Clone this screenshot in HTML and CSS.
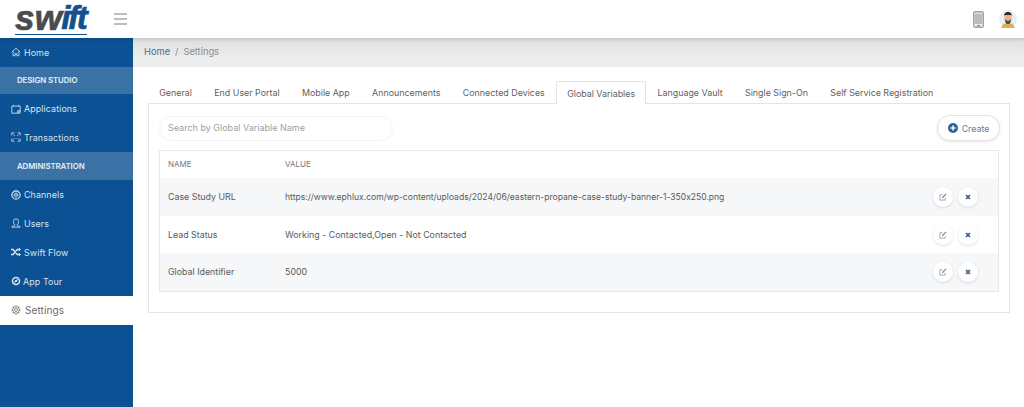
FILE: index.html
```html
<!DOCTYPE html>
<html lang="en">
<head>
<meta charset="utf-8">
<title>Settings</title>
<link rel="stylesheet" href="styles.css">
</head>
<body>
<header class="topbar">
  <div class="logo"><span class="logo-grey">sw</span><span class="logo-blue">ift</span></div>
  <svg class="burger" width="13" height="12" viewBox="0 0 13 12"><path d="M0 1h13M0 6h13M0 11h13" stroke="#a9a9a9" stroke-width="1.4"/></svg>
  <div class="top-right">
    <svg class="phone" width="11" height="17" viewBox="0 0 11 17"><rect x=".7" y=".7" width="9.6" height="15.6" rx="1.6" fill="#f0f0f0" stroke="#a2a2a2" stroke-width="1.4"/><rect x="1.5" y="2.6" width="8" height="10.4" fill="#bdbdbd"/><rect x="4" y="14" width="3" height="1.4" fill="#8e8e8e"/></svg>
    <svg class="avatar" width="18" height="18" viewBox="0 0 18 18"><circle cx="9" cy="9" r="9" fill="#e6f0f3"/><path d="M2.5 18c.5-4 3-5 6.500-5s6 1 6.500 5z" fill="#e0ac55"/><ellipse cx="9" cy="8" rx="3.600" ry="4.600" fill="#e9b48f"/><path d="M5.200 6.500C5 3 7 2 9 2s4 1 3.800 4.500L12 5H6z" fill="#2c2a28"/><path d="M5.800 9c.4 4 2 5 3.200 5s2.800-1 3.200-5l-1 1.500H6.800z" fill="#3a332e"/><rect x="8" y="10.800" width="2" height=".8" fill="#e9b48f"/></svg>
  </div>
</header>
<div class="shell">
  <nav class="sidebar">
    <a class="nav-item"><svg class="ni" viewBox="0 0 12 12"><path d="M1 6 6 1.500 11 6M2.500 5v5.500h2.500V7.500h2v3h2.500V5" fill="none" stroke="currentColor"/></svg>Home</a>
    <div class="nav-head">DESIGN STUDIO</div>
    <a class="nav-item"><svg class="ni" viewBox="0 0 12 12"><path d="M1 2.500h10v8.500H1zM3 1v1.500M9 1v1.500M8 11l3-3H8z" fill="none" stroke="currentColor"/></svg>Applications</a>
    <a class="nav-item"><svg class="ni" viewBox="0 0 12 12"><path d="M1 4V1h3M8 1h3v3M1 8v3h3M8 11h3V8M3 3l1.500 1.500M9 3 7.500 4.500M3 9l1.500-1.500M9 9 7.500 7.500" fill="none" stroke="currentColor"/></svg>Transactions</a>
    <div class="nav-head second">ADMINISTRATION</div>
    <a class="nav-item"><svg class="ni" viewBox="0 0 12 12"><circle cx="6" cy="6" r="5" fill="none" stroke="currentColor" stroke-width="1.300"/><circle cx="6" cy="6" r="1.500" fill="none" stroke="currentColor"/><path d="M6 1v3.500M6 7.500V11M1 6h3.500M7.500 6H11M2.500 2.500 5 5M7 7l2.500 2.500M9.500 2.500 7 5M5 7 2.500 9.500" stroke="currentColor" stroke-width=".7"/></svg>Channels</a>
    <a class="nav-item"><svg class="ni" viewBox="0 0 12 12"><path d="M4.500 8C3 6.500 3 5.500 3 4a3 3 0 0 1 6 0c0 1.500 0 2.500-1.500 4v1l3.500 1.500V11H1v-.500L4.500 9z" fill="none" stroke="currentColor"/></svg>Users</a>
    <a class="nav-item"><svg class="ni" viewBox="0 0 12 12"><path d="M0 3h2.500l5 6H10M0 9h2.500l5-6H10" fill="none" stroke="currentColor" stroke-width="1.600"/><path d="m9.500 1 2.500 2-2.500 2zM9.500 7 12 9l-2.500 2z" fill="currentColor"/></svg>Swift Flow</a>
    <a class="nav-item tour"><svg class="ni" viewBox="0 0 12 12"><circle cx="6" cy="6" r="4.200" fill="none" stroke="currentColor" stroke-width="1.800"/><path d="M8.500 3.500 7 7 3.500 8.500 5 5z" fill="currentColor"/></svg>App Tour</a>
    <a class="nav-item active"><svg class="ni" viewBox="0 0 12 12"><circle cx="6" cy="6" r="1.800" fill="none" stroke="currentColor" stroke-width=".9"/><circle cx="6" cy="6" r="4" fill="none" stroke="currentColor" stroke-width=".9"/><path d="M6 .5v1.500M6 10v1.500M.5 6H2M10 6h1.500M2.100 2.100l1.100 1.100M8.800 8.800l1.100 1.100M9.900 2.100 8.800 3.200M3.200 8.800 2.100 9.900" stroke="currentColor" stroke-width="1.300"/></svg>Settings</a>
  </nav>
  <main class="main">
    <div class="crumbs"><span class="crumb-link">Home</span><span class="crumb-sep">/</span><span>Settings</span></div>
    <div class="content">
      <ul class="tabs">
        <li>General</li><li>End User Portal</li><li>Mobile App</li><li>Announcements</li><li>Connected Devices</li><li class="current">Global Variables</li><li>Language Vault</li><li>Single Sign-On</li><li>Self Service Registration</li>
      </ul>
      <section class="card">
        <div class="toolbar">
          <div class="search">Search by Global Variable Name</div>
          <button class="create"><svg width="10" height="10" viewBox="0 0 10 10"><circle cx="5" cy="5" r="5" fill="#2f6299"/><path d="M5 2.500v5M2.500 5h5" stroke="#fff" stroke-width="1.500"/></svg>Create</button>
        </div>
        <div class="table">
          <div class="row head"><div class="c-name">NAME</div><div class="c-val">VALUE</div></div>
          <div class="row odd"><div class="c-name">Case Study URL</div><div class="c-val url">https://www.ephlux.com/wp-content/uploads/2024/06/eastern-propane-case-study-banner-1-350x250.png</div><div class="acts"><span class="act"><svg class="edit" viewBox="0 0 9 9"><path d="M7 5.500V8H1V2h3" fill="none" stroke="currentColor" stroke-width=".8"/><path d="m3.500 4.500 4-4 1 1-4 4-1.300.3z" fill="currentColor"/></svg></span><span class="act"><svg class="del" viewBox="0 0 6 6"><path d="m1 1 4 4M5 1 1 5" stroke="currentColor" stroke-width="1.700"/></svg></span></div></div>
          <div class="row"><div class="c-name">Lead Status</div><div class="c-val">Working - Contacted,Open - Not Contacted</div><div class="acts"><span class="act"><svg class="edit" viewBox="0 0 9 9"><path d="M7 5.500V8H1V2h3" fill="none" stroke="currentColor" stroke-width=".8"/><path d="m3.500 4.500 4-4 1 1-4 4-1.300.3z" fill="currentColor"/></svg></span><span class="act"><svg class="del" viewBox="0 0 6 6"><path d="m1 1 4 4M5 1 1 5" stroke="currentColor" stroke-width="1.700"/></svg></span></div></div>
          <div class="row odd"><div class="c-name">Global Identifier</div><div class="c-val">5000</div><div class="acts"><span class="act"><svg class="edit" viewBox="0 0 9 9"><path d="M7 5.500V8H1V2h3" fill="none" stroke="currentColor" stroke-width=".8"/><path d="m3.500 4.500 4-4 1 1-4 4-1.300.3z" fill="currentColor"/></svg></span><span class="act"><svg class="del" viewBox="0 0 6 6"><path d="m1 1 4 4M5 1 1 5" stroke="currentColor" stroke-width="1.700"/></svg></span></div></div>
        </div>
      </section>
    </div>
  </main>
</div>
</body>
</html>
```
FILE: styles.css
```css
* { box-sizing: border-box; }
html, body { margin: 0; height: 407px; overflow: hidden; background: #fff; }
body { font-family: "Inter", "Open Sans", sans-serif; font-size: 8.8px; color: #5c5c5c; display: flex; flex-direction: column; font-feature-settings: "calt" 0; }
.topbar { height: 38px; flex: none; display: flex; align-items: center; background: #fff; padding: 0 7px 0 15px; position: relative; z-index: 2; box-shadow: 0 1px 4px rgba(0,0,0,.15); }
.logo { width: 72px; height: 33px; margin-right: 27px; flex: none; display: flex; align-items: flex-end; font-family: "Liberation Sans", sans-serif; font-style: italic; font-weight: 700; -webkit-text-stroke: .7px; border-bottom: 1px solid #14508c; margin-top: -1px; }
.logo-grey { color: #4b4b4d; font-size: 35px; letter-spacing: .3px; line-height: 32px; }
.logo-blue { color: #14508c; font-size: 33px; letter-spacing: -2.400px; line-height: 32px; margin-left: -1px; }
.burger { flex: none; }
.top-right { margin-left: auto; display: flex; align-items: center; gap: 15px; }
.shell { flex: 1; display: flex; min-height: 0; }
.sidebar { width: 133px; flex: none; background: #0b5193; display: flex; flex-direction: column; color: #d9e5f0; }
.nav-item { height: 28.850px; display: flex; align-items: center; gap: 3px; padding-left: 11px; font-size: 8.900px; letter-spacing: .1px; }
.nav-item.tour { gap: 2px; }
.ni { width: 10px; height: 10px; flex: none; }
.nav-head { height: 27.300px; display: flex; align-items: center; padding-left: 17px; background: #3b72a6; color: #e8eff6; font-size: 7.800px; font-weight: 600; letter-spacing: -.05px; }
.nav-head.second { height: 28.300px; }
.nav-item.active { background: #fff; color: #6a6a6a; font-size: 10px; gap: 4px; height: 29.500px; }
.main { flex: 1; min-width: 0; display: flex; flex-direction: column; }
.crumbs { height: 29px; background: linear-gradient(#dedede, #ededed 70%); display: flex; align-items: center; padding: 0 0 2px 11px; gap: 5px; color: #8b8b8b; font-size: 9.300px; }
.crumb-link { color: #4f6f96; }
.content { padding: 14px 14px 0 15px; }
.tabs { list-style: none; margin: 0; padding: 0; display: flex; height: 22px; position: relative; z-index: 1; }
.tabs li { padding: 0 11.200px; display: flex; align-items: center; height: 22px; color: #5f5f5f; font-size: 8.900px; white-space: nowrap; }
.tabs li.current { background: #fff; border: 1px solid #e4e4e4; border-bottom: 0; border-radius: 2px 2px 0 0; height: 23px; padding: 0 10.200px; }
.card { border: 1px solid #e4e4e4; height: 210px; padding: 11px 10px 0; }
.toolbar { display: flex; justify-content: space-between; align-items: center; height: 26px; margin-bottom: 9px; }
.search { width: 234px; height: 25px; border: 1px solid #f2f2f2; border-radius: 13px; display: flex; align-items: center; padding: 0 0 1px 8px; color: #a0a0a0; font-size: 9px; }
.create { width: 63px; height: 26px; margin-right: -1px; border: 1px solid #e3e3e3; border-radius: 13px; background: #fff; display: flex; align-items: center; justify-content: center; gap: 4px; color: #5c7da3; font: inherit; font-size: 8.800px; box-shadow: 0 1px 3px rgba(0,0,0,.1); padding: 0; }
.table { border: 1px solid #e8e8e8; }
.row { display: flex; align-items: center; height: 37.500px; padding-left: 8px; color: #5a5a5a; font-size: 8.850px; }
.row.head { height: 27px; padding-bottom: 1px; font-size: 8px; color: #777; }
.row.odd { background: #f6f7f9; }
.c-name { width: 117px; flex: none; }
.c-val { flex: 1; white-space: nowrap; }
.url { font-size: 8.550px; }
.acts { display: flex; gap: 5px; margin: 1px 20px 0 0; }
.act { width: 20px; height: 20px; border-radius: 50%; background: #fff; display: flex; align-items: center; justify-content: center; color: #3f5f85; box-shadow: 0 1px 3px rgba(0,0,0,.12); }
.edit { width: 8px; height: 8px; color: #7c8ea3; }
.del { width: 6px; height: 6px; }
```
